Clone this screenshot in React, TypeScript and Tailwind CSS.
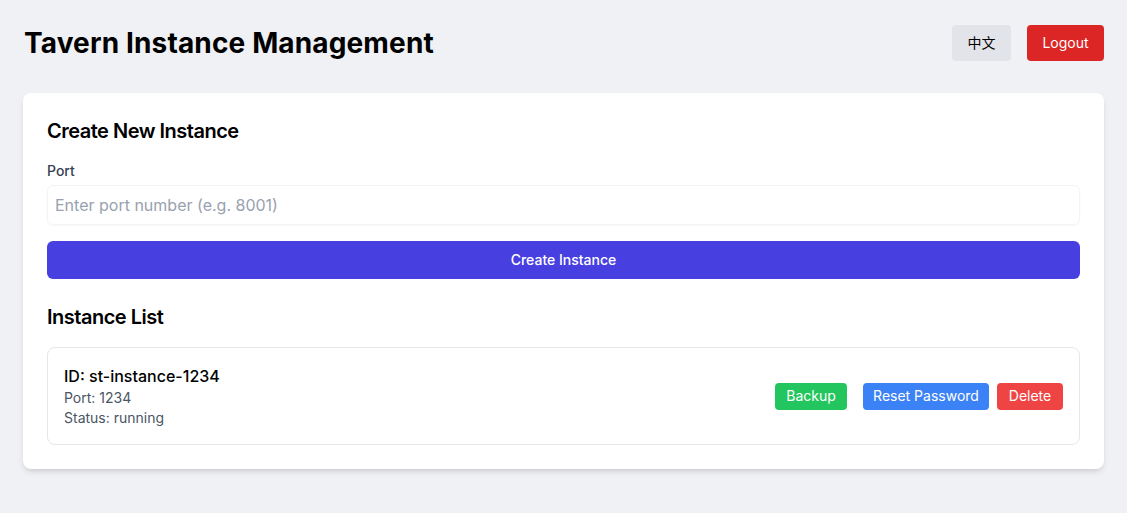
import React, { useState } from 'react';

type Instance = {
  id: string;
  port: number;
  status: string;
};

const instances: Instance[] = [{ id: 'st-instance-1234', port: 1234, status: 'running' }];

const App: React.FC = () => {
  const [port, setPort] = useState('');

  return (
    <div className="min-h-screen bg-[#f0f1f5] px-[23px] pt-[25px] pb-6 font-['Inter','Noto_Sans_CJK_SC',sans-serif] text-black">
      {/* Header */}
      <div className="flex items-center justify-between mb-8 h-9">
        <h1 className="ml-px text-[28px] font-bold tracking-[0.005em] text-black">Tavern Instance Management</h1>
        <div className="flex items-center gap-4">
          <button className="h-9 w-[59px] rounded bg-[#e2e4e9] text-sm text-black">中文</button>
          <button className="h-9 w-[77px] rounded bg-[#dc2626] text-sm text-white">Logout</button>
        </div>
      </div>

      {/* Main card */}
      <div className="bg-white rounded-lg shadow-md p-6">
        <h2 className="text-xl font-semibold tracking-tight mb-4">Create New Instance</h2>
        <label className="block text-sm font-medium text-gray-700 mb-1">Port</label>
        <input
          type="text"
          value={port}
          onChange={e => setPort(e.target.value)}
          placeholder="Enter port number (e.g. 8001)"
          className="block w-full h-10 px-[7px] rounded-md border border-[#f3f4f6] shadow-[0_1px_2px_rgba(0,0,0,0.03)] text-base placeholder:text-gray-400 outline-none"
        />
        <button className="mt-4 w-full h-[38px] rounded-md bg-[#473fe0] text-sm font-medium text-white">
          Create Instance
        </button>

        <h2 className="mt-6 mb-4 text-xl font-semibold tracking-tight">Instance List</h2>
        <div className="space-y-4">
          {instances.map(inst => (
            <div key={inst.id} className="flex items-center justify-between border border-gray-200 rounded-lg p-4">
              <div>
                <div className="text-base leading-6 font-medium">ID: {inst.id}</div>
                <div className="text-sm text-gray-600">Port: {inst.port}</div>
                <div className="text-sm text-gray-600">Status: {inst.status}</div>
              </div>
              <div className="flex items-center gap-2">
                <button className="mr-2 h-[27px] w-[72px] rounded bg-[#22c55e] text-sm text-white">Backup</button>
                <button className="h-[27px] w-[126px] rounded bg-[#3b82f6] text-sm text-white">Reset Password</button>
                <button className="h-[27px] w-[66px] rounded bg-[#ef4444] text-sm text-white">Delete</button>
              </div>
            </div>
          ))}
        </div>
      </div>
    </div>
  );
};

export default App;
